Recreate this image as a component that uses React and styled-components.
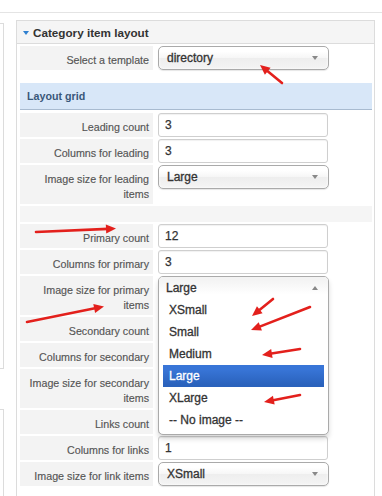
import React from "react";
import styled, { createGlobalStyle } from "styled-components";

const GlobalStyle = createGlobalStyle`
  html, body { margin: 0; padding: 0; background: #fff; }
  body { font-family: "Liberation Sans", Arial, sans-serif; }
  * { box-sizing: border-box; }
`;

const Page = styled.div`
  position: relative;
  width: 382px;
  height: 496px;
  overflow: hidden;
  padding-top: 12px;
`;

const Frame = styled.div`
  border-top: 1px solid #e4e4e4;
  display: grid;
  grid-template-columns: 4px 359px;
  column-gap: 12px;
  padding-top: 7px;
  height: 100%;
`;

const LeftCol = styled.div`
  display: flex;
  flex-direction: column;
  gap: 40px;
  padding-top: 3px;
`;

const LeftBox = styled.div`
  width: 4px;
  height: ${(p) => p.$h}px;
  border: 1px solid #dcdcdc;
  border-left: none;
  ${(p) => (p.$open ? "border-bottom: none;" : "")}
`;

const Panel = styled.div`
  border: 1px solid #dcdcdc;
  border-bottom: none;
  min-height: 480px;
`;

const PanelHeader = styled.div`
  height: 23px;
  background: #f5f5f5;
  border-bottom: 1px solid #dcdcdc;
  display: flex;
  align-items: center;
  gap: 4px;
  padding-left: 6px;
  font-weight: bold;
  font-size: 11.7px;
  color: #333;
`;

const Caret = styled.span`
  width: 0;
  height: 0;
  border-left: 3px solid transparent;
  border-right: 3px solid transparent;
  border-top: 4px solid #2f80d0;
  margin-top: 1px;
`;

const PanelBody = styled.div`
  padding: 2px 2px 0 3px;
  display: flex;
  flex-direction: column;
  gap: 2px;
`;

const Row = styled.div`
  display: grid;
  grid-template-columns: 133px 170px;
  column-gap: 5px;
  align-items: start;
`;

const Label = styled.div`
  background: #f3f3f3;
  text-align: right;
  padding: 7px 4px 2px 4px;
  line-height: 15px;
  font-size: 10.7px;
  color: #555;
  -webkit-text-stroke: 0.15px #555;
  min-height: 24px;
  align-self: stretch;
`;

const Control = styled.div`
  position: relative;
`;

const Input = styled.div`
  width: 170px;
  height: 24px;
  border: 1px solid #cfcfcf;
  border-radius: 3px;
  background: #fff;
  box-shadow: inset 0 1px 1px rgba(0, 0, 0, 0.06);
  padding-left: 6px;
  line-height: 22px;
  font-size: 12px;
  color: #333;
  -webkit-text-stroke: 0.25px #333;
`;

const Select = styled.div`
  width: 171px;
  height: 24px;
  border: 1px solid #aaa;
  border-radius: 5px;
  background: linear-gradient(#fff 20%, #f6f6f6 50%, #eee 52%, #f4f4f4 100%);
  box-shadow: inset 0 0 3px #fff, 0 1px 1px rgba(0, 0, 0, 0.1);
  padding: 0 10px 0 8px;
  display: flex;
  align-items: center;
  justify-content: space-between;
  font-size: 12px;
  color: #333;
  -webkit-text-stroke: 0.3px #333;
`;

const Arrow = styled.span`
  width: 0;
  height: 0;
  border-left: 3px solid transparent;
  border-right: 3px solid transparent;
  ${(p) =>
    p.$up
      ? "border-bottom: 4px solid #888;"
      : "border-top: 4px solid #888;"}
  -webkit-text-stroke: 0;
`;

const SectionHeader = styled.div`
  margin-top: 11px;
  margin-bottom: 1px;
  height: 27px;
  background: #d8e7f8;
  border-bottom: 1px solid #a8bbd0;
  display: flex;
  align-items: center;
  padding-left: 7px;
  font-weight: bold;
  font-size: 10.7px;
  color: #3a5778;
`;

const Spacer = styled.div`
  height: 16px;
  background: #f5f5f5;
`;

const Drop = styled.div`
  position: absolute;
  top: 0;
  left: 0;
  width: 171px;
  z-index: 3;
  border: 1px solid #aaa;
  border-radius: 5px;
  background: #fff;
  box-shadow: 0 4px 5px rgba(0, 0, 0, 0.15);
  overflow: hidden;
`;

const DropHead = styled.div`
  height: 22px;
  background: linear-gradient(#f3f3f3 10%, #fff 80%);
  padding: 0 10px 0 7px;
  display: flex;
  align-items: center;
  justify-content: space-between;
  font-size: 12px;
  color: #333;
  -webkit-text-stroke: 0.3px #333;
`;

const Results = styled.ul`
  list-style: none;
  margin: 0 4px 3px 0;
  padding: 0 0 0 4px;
`;

const Result = styled.li`
  height: 22px;
  line-height: 22px;
  padding: 0 6px;
  font-size: 12px;
  color: ${(p) => (p.$active ? "#fff" : "#333")};
  -webkit-text-stroke: 0.3px ${(p) => (p.$active ? "#fff" : "#333")};
  background: ${(p) =>
    p.$active ? "linear-gradient(#3875d7 20%, #2a62bc 90%)" : "transparent"};
`;

const Overlay = styled.svg`
  position: absolute;
  left: 0;
  top: 0;
  pointer-events: none;
  z-index: 10;
`;

function RedArrow({ x1, y1, x2, y2 }) {
  const dx = x2 - x1;
  const dy = y2 - y1;
  const len = Math.hypot(dx, dy);
  const ux = dx / len;
  const uy = dy / len;
  const hl = 10;
  const hw = 4.5;
  const bx = x2 - ux * hl;
  const by = y2 - uy * hl;
  const px = -uy;
  const py = ux;
  const pts = `${x2},${y2} ${bx + px * hw},${by + py * hw} ${bx - px * hw},${by - py * hw}`;
  return (
    <g>
      <line x1={x1} y1={y1} x2={bx + ux * 2} y2={by + uy * 2} stroke="#e3201c" strokeWidth="2.6" strokeLinecap="round" />
      <polygon points={pts} fill="#e3201c" />
    </g>
  );
}

const arrows = [
  [282, 83, 260, 65],
  [36, 232, 116, 228.5],
  [27, 322, 104, 306.5],
  [273, 299, 252, 316],
  [310, 307, 251, 330],
  [300, 349, 262, 355],
  [300, 395, 264, 402],
];

function TextRow({ label, value }) {
  return (
    <Row>
      <Label>{label}</Label>
      <Control>
        <Input>{value}</Input>
      </Control>
    </Row>
  );
}

function SelectRow({ label, value }) {
  return (
    <Row>
      <Label>{label}</Label>
      <Control>
        <Select>
          <span>{value}</span>
          <Arrow />
        </Select>
      </Control>
    </Row>
  );
}

const options = ["XSmall", "Small", "Medium", "Large", "XLarge", "-- No image --"];

export default function App() {
  return (
    <>
      <GlobalStyle />
      <Page>
        <Frame>
          <LeftCol>
            <LeftBox $h={346} />
            <LeftBox $h={120} $open />
          </LeftCol>
          <Panel>
            <PanelHeader>
              <Caret />
              <span>Category item layout</span>
            </PanelHeader>
            <PanelBody>
              <SelectRow label="Select a template" value="directory" />
              <SectionHeader>Layout grid</SectionHeader>
              <TextRow label="Leading count" value="3" />
              <TextRow label="Columns for leading" value="3" />
              <SelectRow label={<>Image size for leading<br />items</>} value="Large" />
              <Spacer />
              <TextRow label="Primary count" value="12" />
              <TextRow label="Columns for primary" value="3" />
              <Row>
                <Label>Image size for primary<br />items</Label>
                <Control>
                  <Drop>
                    <DropHead>
                      <span>Large</span>
                      <Arrow $up />
                    </DropHead>
                    <Results>
                      {options.map((o) => (
                        <Result key={o} $active={o === "Large"}>{o}</Result>
                      ))}
                    </Results>
                  </Drop>
                </Control>
              </Row>
              <TextRow label="Secondary count" value="" />
              <TextRow label="Columns for secondary" value="" />
              <SelectRow label={<>Image size for secondary<br />items</>} value="" />
              <TextRow label="Links count" value="" />
              <TextRow label="Columns for links" value="1" />
              <SelectRow label="Image size for link items" value="XSmall" />
            </PanelBody>
          </Panel>
        </Frame>
        <Overlay width="382" height="496" viewBox="0 0 382 496">
          {arrows.map((a, i) => (
            <RedArrow key={i} x1={a[0]} y1={a[1]} x2={a[2]} y2={a[3]} />
          ))}
        </Overlay>
      </Page>
    </>
  );
}
